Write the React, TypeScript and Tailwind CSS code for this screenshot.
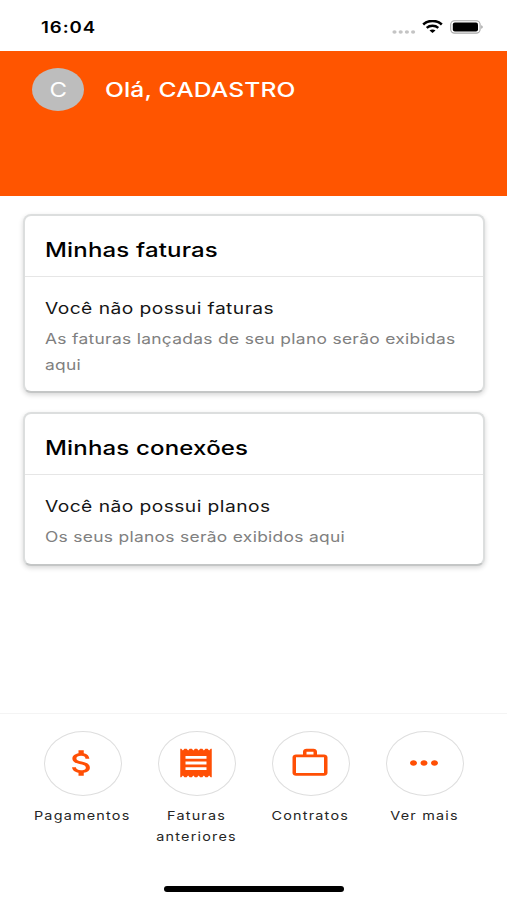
import type { ReactNode } from 'react';
import clsx from 'clsx';

interface WideTextProps {
  children: ReactNode;
  className?: string;
  center?: boolean;
}

function WideText({ children, className, center = false }: WideTextProps) {
  return (
    <span
      className={clsx(
        'block w-max scale-x-[1.2] whitespace-nowrap',
        center ? 'origin-center' : 'origin-left',
        className,
      )}
    >
      {children}
    </span>
  );
}

function StatusBar() {
  return (
    <div className="flex h-[51px] items-center justify-between pl-[41px] pr-6 pt-1">
      <WideText className="text-[15.5px] font-semibold tracking-[0.8px] text-black">16:04</WideText>
      <div className="flex items-center">
        <svg width="24" height="4" viewBox="0 0 24 4" className="mr-[6px] mt-[8px]" fill="#c4c4c4">
          <ellipse cx="2.5" cy="2" rx="2.1" ry="1.7" />
          <ellipse cx="8.7" cy="2" rx="2.1" ry="1.7" />
          <ellipse cx="14.9" cy="2" rx="2.1" ry="1.7" />
          <ellipse cx="21.1" cy="2" rx="2.1" ry="1.7" />
        </svg>
        <svg width="21" height="13" viewBox="0 0 21 13" className="mb-[2px] mr-[7px]">
          <path d="M1.2 4.5C6.2-.3 14.8-.3 19.8 4.5" fill="none" stroke="#000" strokeWidth="2.5" />
          <path d="M4.7 7.9C7.8 5 13.2 5 16.3 7.9" fill="none" stroke="#000" strokeWidth="2.3" />
          <path d="M7.5 10.6C9 9.1 12 9.1 13.5 10.6L10.5 13Z" fill="#000" />
        </svg>
        <svg width="33" height="14" viewBox="0 0 33 14" className="mb-px">
          <rect x=".7" y=".7" width="29.4" height="12.4" rx="3.8" fill="#fff" stroke="#a8a8a8" strokeWidth="1.1" />
          <rect x="2.8" y="2.4" width="25.2" height="9" rx="2" fill="#000" />
          <path d="M31.3 5.2C33.1 5.6 33.1 8.4 31.3 8.8Z" fill="#999" />
        </svg>
      </div>
    </div>
  );
}

interface InfoCardProps {
  title: string;
  subtitle: string;
  lines: string[];
  className: string;
}

function InfoCard({ title, subtitle, lines, className }: InfoCardProps) {
  return (
    <section
      className={clsx(
        'rounded-[8px] border-2 border-[#dcdede] border-b-[#c4c6c6] bg-white shadow-[0_2px_5px_rgba(0,0,0,0.16)]',
        className,
      )}
    >
      <div className="flex h-[61px] items-center border-b border-[#e6e6e6] pl-5 pt-[7px]">
        <WideText className="text-[20px] font-medium tracking-[0.15px] text-black">{title}</WideText>
      </div>
      <div className="pl-5 pt-[19px]">
        <WideText className="text-[16px] leading-6 tracking-[0.38px] text-[#151515]">{subtitle}</WideText>
        <div className="mt-[6px]">
          {lines.map((line) => (
            <WideText key={line} className="text-[14.5px] leading-[26px] tracking-[0.25px] text-[#808080]">
              {line}
            </WideText>
          ))}
        </div>
      </div>
    </section>
  );
}

const ACTIONS = [
  {
    lines: ['Pagamentos'],
    path: 'M11.8 10.9c-2.27-.59-3-1.2-3-2.15 0-1.09 1.01-1.85 2.7-1.85 1.78 0 2.44.85 2.5 2.1h2.21c-.07-1.72-1.12-3.3-3.21-3.81V3h-3v2.16c-1.94.42-3.5 1.68-3.5 3.61 0 2.31 1.91 3.46 4.7 4.13 2.5.6 3 1.48 3 2.41 0 .69-.49 1.79-2.7 1.79-2.06 0-2.87-.92-2.98-2.1h-2.2c.12 2.19 1.76 3.42 3.68 3.83V21h3v-2.15c1.95-.37 3.5-1.5 3.5-3.55 0-2.84-2.43-3.81-4.7-4.4z',
  },
  {
    lines: ['Faturas', 'anteriores'],
    path: 'M18 17H6v-2h12v2zm0-4H6v-2h12v2zm0-4H6V7h12v2zM3 22h.6l.9-1.1.9 1.1h1.2l.9-1.1.9 1.1h1.2l.9-1.1.9 1.1h1.2l.9-1.1.9 1.1h1.2l.9-1.1.9 1.1h1.2l.9-1.1.9 1.1h.6V2h-.6l-.9 1.1-.9-1.1h-1.2l-.9 1.1-.9-1.1h-1.2l-.9 1.1-.9-1.1h-1.2l-.9 1.1L9.6 2H8.4l-.9 1.1L6.6 2H5.4l-.9 1.1L3.6 2H3z',
  },
  {
    lines: ['Contratos'],
    path: 'M14 6V4h-4v2h4zM4 8v11h16V8H4zm16-2c1.11 0 2 .89 2 2v11c0 1.11-.89 2-2 2H4c-1.11 0-2-.89-2-2l.01-11c0-1.11.88-2 1.99-2h4V4c0-1.11.89-2 2-2h4c1.11 0 2 .89 2 2v2h4z',
  },
  {
    lines: ['Ver mais'],
    path: 'M6 10c-1.1 0-2 .9-2 2s.9 2 2 2 2-.9 2-2-.9-2-2-2zm12 0c-1.1 0-2 .9-2 2s.9 2 2 2 2-.9 2-2-.9-2-2-2zm-6 0c-1.1 0-2 .9-2 2s.9 2 2 2 2-.9 2-2-.9-2-2-2z',
  },
];

export default function App() {
  return (
    <div className="flex h-[900px] w-[507px] flex-col overflow-hidden bg-white font-['Inter',sans-serif]">
      <StatusBar />
      <header className="flex h-[145px] items-start bg-[#ff5500] pl-8 pt-[17px]">
        <div className="flex h-[43px] w-[52px] items-center justify-center rounded-[50%] bg-[#bdbdbd]">
          <WideText center className="text-[20px] text-white">
            C
          </WideText>
        </div>
        <WideText className="ml-[21px] text-[20.5px] font-medium leading-[43px] tracking-[0.12px] text-white">
          Olá, CADASTRO
        </WideText>
      </header>

      <main className="flex flex-1 flex-col gap-[19px] pl-[23px] pr-[22px] pt-[18px]">
        <InfoCard
          title="Minhas faturas"
          subtitle="Você não possui faturas"
          lines={['As faturas lançadas de seu plano serão exibidas', 'aqui']}
          className="h-[179px]"
        />
        <InfoCard
          title="Minhas conexões"
          subtitle="Você não possui planos"
          lines={['Os seus planos serão exibidos aqui']}
          className="h-[154px]"
        />
      </main>

      <footer className="flex h-[187px] flex-col border-t border-[#f4f4f4]">
        <nav className="grid grid-cols-[repeat(4,114px)] pl-[25.5px] pt-[17px]">
          {ACTIONS.map((action) => (
            <div key={action.lines[0]} className="flex flex-col items-center">
              <div className="flex h-[65px] w-[78px] items-center justify-center rounded-[50%] border border-[#dedede]">
                <svg
                  width="42"
                  height="34"
                  viewBox="0 0 24 24"
                  preserveAspectRatio="none"
                  fill="#ff4f05"
                  className="mb-px mr-px"
                >
                  <path d={action.path} />
                </svg>
              </div>
              <div className="mt-[8.5px] flex flex-col items-center">
                {action.lines.map((line) => (
                  <WideText
                    key={line}
                    center
                    className="text-[12px] leading-[21px] tracking-[1px] text-[#252525]"
                  >
                    {line}
                  </WideText>
                ))}
              </div>
            </div>
          ))}
        </nav>
        <div className="mx-auto mb-[8px] mt-auto h-[6px] w-[180px] rounded-full bg-black" />
      </footer>
    </div>
  );
}
